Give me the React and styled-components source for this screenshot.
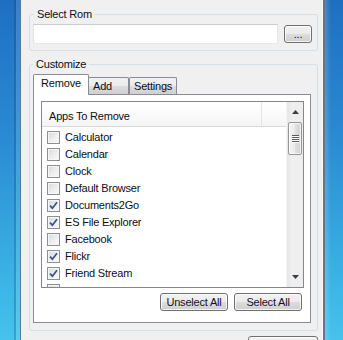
import React from "react";
import styled, { createGlobalStyle } from "styled-components";

const Global = createGlobalStyle`
  html, body { margin: 0; padding: 0; }
  body {
    width: 343px;
    height: 340px;
    overflow: hidden;
    font-family: "Liberation Sans", Arial, sans-serif;
    font-size: 11px;
    color: #0d0d16;
  }
  * { box-sizing: border-box; }
`;

const Screen = styled.div`
  display: flex;
  width: 343px;
  height: 340px;
  overflow: hidden;
`;

const Glass = styled.div`
  flex: 0 0 ${(p) => p.$w}px;
  height: 100%;
  background:
    ${(p) =>
      p.$side === "left"
        ? "linear-gradient(90deg, transparent 14px, rgba(0,40,90,0.22) 14px, rgba(0,40,90,0.22) 16px, rgba(255,255,255,0.12) 16px)"
        : "linear-gradient(90deg, rgba(255,255,255,0.18) 0, rgba(255,255,255,0) 6px)"},
    linear-gradient(180deg, #1f6fc1 0%, #2a8ad3 40%, #3cb6e6 85%, #46c2ec 100%);
`;

const Window = styled.div`
  flex: 1;
  display: flex;
  flex-direction: column;
  background: #f0f0f0;
  border-left: 1px solid #5f7690;
  border-right: 2px solid #5f7690;
  box-shadow: inset -1px 0 0 #fbfbfb;
  padding: 7px 5px 0 8px;
  overflow: hidden;
`;

const GroupBox = styled.fieldset`
  margin: 0 0 ${(p) => p.$mb || 0}px 0;
  padding: ${(p) => p.$pad};
  border: 1px solid #d5dfe5;
  border-radius: 3px;
  min-width: 0;
`;

const Legend = styled.legend`
  margin-left: ${(p) => p.$indent}px;
  padding: 0 3px;
  font-size: 11px;
  line-height: 15px;
  letter-spacing: -0.2px;
`;

const RomRow = styled.div`
  display: flex;
  align-items: center;
  gap: 6px;
`;

const TextBox = styled.input`
  width: 245px;
  height: 20px;
  margin: 0;
  padding: 0 3px;
  background: #fff;
  border: 1px solid;
  border-color: #c9ccd2 #e2e4e9 #e6e9ee #e2e4e9;
  border-radius: 1px;
  font: inherit;
  outline: none;
`;

const Button = styled.button`
  width: ${(p) => p.$w}px;
  height: ${(p) => p.$h}px;
  margin: 0;
  padding: 0;
  border: 1px solid #707070;
  border-radius: 3px;
  background: linear-gradient(180deg, #f2f2f2 0%, #ebebeb 48%, #dddddd 52%, #cfcfcf 100%);
  box-shadow: inset 0 0 0 1px rgba(255, 255, 255, 0.75);
  font-family: "Liberation Sans", Arial, sans-serif;
  font-size: 11px;
  letter-spacing: -0.2px;
  color: #15102a;
  line-height: ${(p) => p.$h - 2}px;
  text-align: center;
`;

const TabStrip = styled.div`
  display: flex;
  align-items: flex-end;
  height: 20px;
`;

const Tab = styled.div`
  position: relative;
  width: ${(p) => p.$w}px;
  height: ${(p) => (p.$active ? 21 : 17)}px;
  margin-left: ${(p) => p.$ml || 0}px;
  margin-bottom: ${(p) => (p.$active ? -1 : 0)}px;
  z-index: ${(p) => (p.$active ? 1 : 0)};
  border: 1px solid #898c95;
  border-bottom: none;
  border-radius: 2px 2px 0 0;
  background: ${(p) =>
    p.$active
      ? "#ffffff"
      : "linear-gradient(180deg, #f2f2f2 0%, #ebebeb 50%, #dddddd 50%, #cfcfcf 100%)"};
  text-align: ${(p) => (p.$active ? "center" : "left")};
  padding: 1px 0 0 ${(p) => (p.$active ? 0 : 4)}px;
  line-height: 15px;
  letter-spacing: -0.2px;
`;

const TabPage = styled.div`
  background: #ffffff;
  border: 1px solid #898c95;
  padding: 6px 6px 11px 7px;
`;

const ListView = styled.div`
  display: flex;
  height: 187px;
  border: 1px solid #828790;
  background: #fff;
`;

const ListMain = styled.div`
  flex: 1;
  display: flex;
  flex-direction: column;
  overflow: hidden;
`;

const HeaderRow = styled.div`
  display: flex;
  flex: 0 0 25px;
  height: 25px;
  border-bottom: 1px solid #d8d9db;
  background: linear-gradient(180deg, #ffffff 0%, #fbfbfc 50%, #f4f5f6 100%);
`;

const HeaderCell = styled.div`
  width: ${(p) => (p.$w ? `${p.$w}px` : "auto")};
  flex: ${(p) => (p.$w ? "0 0 auto" : "1")};
  padding: 4px 0 0 7px;
  line-height: 20px;
  letter-spacing: -0.2px;
  border-right: ${(p) => (p.$w ? "1px solid #e3e5e8" : "none")};
`;

const Rows = styled.div`
  flex: 1;
  min-height: 0;
  overflow: hidden;
  padding-top: 2px;
`;

const Row = styled.div`
  display: flex;
  align-items: center;
  gap: 5px;
  height: 17px;
  padding-left: 5px;
  line-height: 17px;
  letter-spacing: -0.2px;
  white-space: nowrap;
`;

const Box = styled.span`
  display: inline-flex;
  align-items: center;
  justify-content: center;
  width: 13px;
  height: 13px;
  flex: 0 0 13px;
  border: 1px solid #8f8f8f;
  background: linear-gradient(135deg, #d6d8db 0%, #eceef0 55%, #f9f9f9 100%);
  box-shadow: inset 0 0 0 1px #f6f6f6;
`;

const ScrollBar = styled.div`
  flex: 0 0 17px;
  display: flex;
  flex-direction: column;
  background: linear-gradient(90deg, #e6e6e6 0%, #efefef 30%, #ededed 100%);
  border-left: 1px solid #f5f5f5;
`;

const ScrollArrow = styled.div`
  height: 20px;
  display: flex;
  align-items: center;
  justify-content: center;
`;

const Track = styled.div`
  flex: 1;
  padding: 0 1px;
`;

const Thumb = styled.div`
  height: 33px;
  border: 1px solid #969696;
  border-radius: 2px;
  background: linear-gradient(90deg, #f4f4f4 0%, #ececec 45%, #dedede 55%, #d4d4d4 100%);
  box-shadow: inset 0 0 0 1px rgba(255, 255, 255, 0.7);
  display: flex;
  flex-direction: column;
  align-items: center;
  justify-content: center;
  gap: 1px;
`;

const Grip = styled.span`
  width: 7px;
  height: 1px;
  background: #5a5a5a;
  box-shadow: 0 1px 0 #ffffff;
`;

const ButtonRow = styled.div`
  display: flex;
  justify-content: flex-end;
  gap: 6px;
  margin-top: 5px;
  padding-right: 2px;
`;

const FooterRow = styled.div`
  display: flex;
  justify-content: flex-end;
`;

const Check = () => (
  <svg width="9" height="9" viewBox="0 0 9 9">
    <path d="M1 4.6 L3.4 7.2 L8 1.2" fill="none" stroke="#3d4f8c" strokeWidth="1.7" />
  </svg>
);

const Arrow = ({ up }) => (
  <svg width="7" height="4" viewBox="0 0 7 4">
    <path d={up ? "M0 4 L3.5 0 L7 4 Z" : "M0 0 L7 0 L3.5 4 Z"} fill="#3f3f3f" />
  </svg>
);

const apps = [
  { name: "Calculator", on: false },
  { name: "Calendar", on: false },
  { name: "Clock", on: false },
  { name: "Default Browser", on: false },
  { name: "Documents2Go", on: true },
  { name: "ES File Explorer", on: true },
  { name: "Facebook", on: false },
  { name: "Flickr", on: true },
  { name: "Friend Stream", on: true },
  { name: "", on: false },
];

export default function App() {
  return (
    <>
      <Global />
      <Screen>
        <Glass $w={20} $side="left" />
        <Window>
          <GroupBox $pad="2px 5px 6px 3px" $mb={6}>
            <Legend $indent={1}>Select Rom</Legend>
            <RomRow>
              <TextBox readOnly value="" />
              <Button $w={28} $h={18}>...</Button>
            </RomRow>
          </GroupBox>
          <GroupBox $pad="2px 6px 7px 3px" $mb={5}>
            <Legend $indent={0}>Customize</Legend>
            <TabStrip>
              <Tab $w={56} $active>Remove</Tab>
              <Tab $w={41} $ml={-1}>Add</Tab>
              <Tab $w={48}>Settings</Tab>
            </TabStrip>
            <TabPage>
              <ListView>
                <ListMain>
                  <HeaderRow>
                    <HeaderCell $w={220}>Apps To Remove</HeaderCell>
                    <HeaderCell />
                  </HeaderRow>
                  <Rows>
                    {apps.map((a, i) => (
                      <Row key={i}>
                        <Box>{a.on && <Check />}</Box>
                        {a.name && <span>{a.name}</span>}
                      </Row>
                    ))}
                  </Rows>
                </ListMain>
                <ScrollBar>
                  <ScrollArrow>
                    <Arrow up />
                  </ScrollArrow>
                  <Track>
                    <Thumb>
                      <Grip />
                      <Grip />
                      <Grip />
                      <Grip />
                    </Thumb>
                  </Track>
                  <ScrollArrow>
                    <Arrow />
                  </ScrollArrow>
                </ScrollBar>
              </ListView>
              <ButtonRow>
                <Button $w={68} $h={18}>Unselect All</Button>
                <Button $w={68} $h={18}>Select All</Button>
              </ButtonRow>
            </TabPage>
          </GroupBox>
          <FooterRow>
            <Button $w={70} $h={23} />
          </FooterRow>
        </Window>
        <Glass $w={18} $side="right" />
      </Screen>
    </>
  );
}
